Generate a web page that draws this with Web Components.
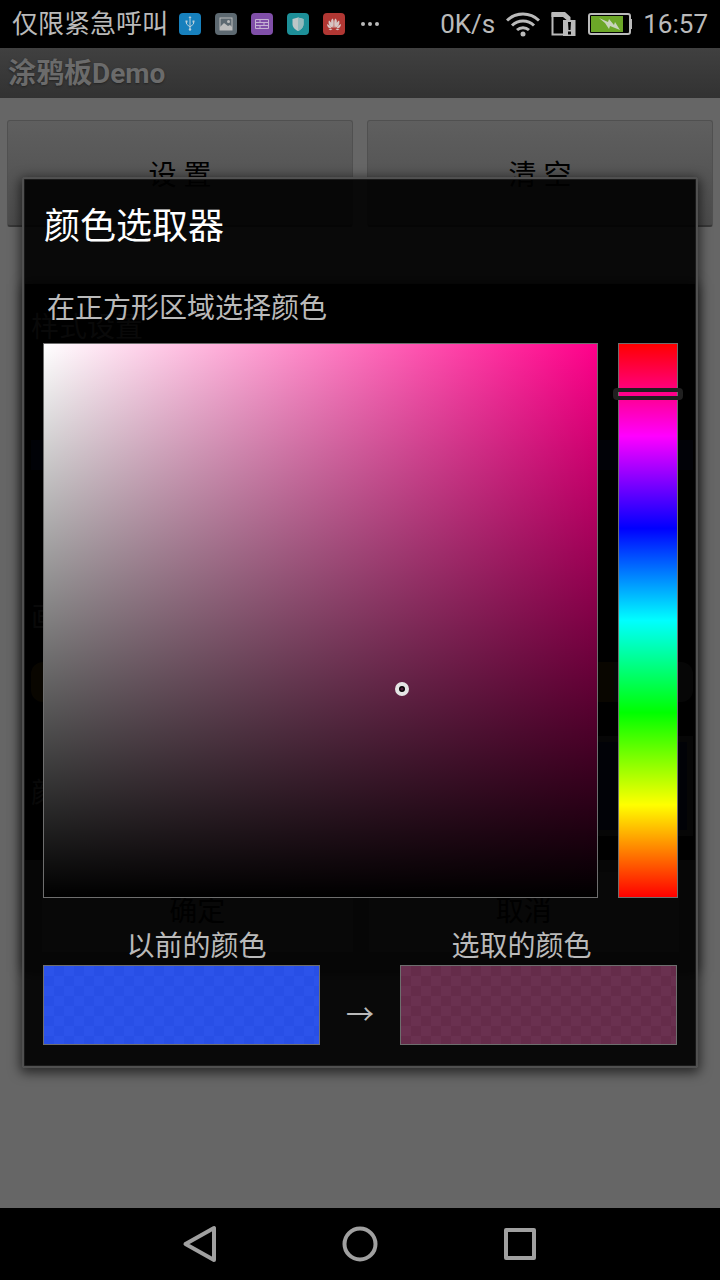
<!DOCTYPE html>
<html lang="zh-CN">
<head>
<meta charset="utf-8">
<meta name="viewport" content="width=device-width, initial-scale=1">
<title>涂鸦板Demo</title>
<style>
html, body { height: 100%; }
body { margin: 0; background: #000; font-family: Roboto, "Noto Sans CJK SC", sans-serif; }
</style>
</head>
<body>
<phone-screen>
  <status-bar slot="status"></status-bar>
  <title-bar>涂鸦板Demo</title-bar>
  <tool-row>
    <tool-button>设 置</tool-button>
    <tool-button>清 空</tool-button>
  </tool-row>
  <style-dialog slot="back"></style-dialog>
  <color-dialog slot="front"></color-dialog>
  <nav-bar slot="nav"></nav-bar>
</phone-screen>
<script>
function define(name, html) {
  const template = document.createElement('template');
  template.innerHTML = html;
  customElements.define(name, class extends HTMLElement {
    constructor() {
      super();
      this.attachShadow({ mode: 'open' }).append(template.content.cloneNode(true));
    }
  });
}

define('phone-screen', `
<style>
:host { display: flex; flex-direction: column; min-height: 100vh; }
main { position: relative; flex: 1; background: #666; }
.layer { position: absolute; inset: 0; display: grid; align-items: center; padding: 0 22px; }
.front { padding-bottom: 11px; }
</style>
<slot name="status"></slot>
<main>
  <slot></slot>
  <div class="layer"><slot name="back"></slot></div>
  <div class="layer front"><slot name="front"></slot></div>
</main>
<slot name="nav"></slot>`);

define('status-bar', `
<style>
:host { display: flex; justify-content: space-between; align-items: center; height: 48px; padding: 0 12px; background: #000; color: #bababa; font-size: 26px; line-height: 48px; white-space: nowrap; }
div { display: flex; align-items: center; }
svg { display: block; flex: none; }
.apps { gap: 11px; }
.apps svg + svg { margin-left: 3px; }
.signals { gap: 11px; }
</style>
<div class="apps">
  <span>仅限紧急呼叫</span>
  <svg width="22" height="24" viewBox="0 0 22 24" aria-hidden="true"><rect y="1" width="22" height="22" rx="4" fill="#1780bd"/><g fill="none" stroke="#b9cfdb" stroke-width="1"><path d="M11 6v11M7.500 9v3l3.500 3 3.500-3V9"/></g><g fill="#b9cfdb"><circle cx="11" cy="17.500" r="1.200"/><path d="M11 4l1.500 2h-3zM6.500 8.500h2v2h-2zM13.500 8.500h2v2h-2z"/></g></svg>
  <svg width="22" height="24" viewBox="0 0 22 24" aria-hidden="true"><rect y="1" width="22" height="22" rx="4" fill="#5d6971"/><rect x="5" y="6" width="12" height="12" fill="none" stroke="#bcbcbc"/><path d="M5 15l4-4 4 3 2-1 2 2v3H5z" fill="#bcbcbc"/><circle cx="13.500" cy="9.500" r="1.500" fill="#bcbcbc"/></svg>
  <svg width="22" height="24" viewBox="0 0 22 24" aria-hidden="true"><rect y="1" width="22" height="22" rx="4" fill="#804fa8"/><path d="M4.500 7.500h13v9h-13zM4.500 10.500h13M4.500 13.500h13M9 7.500v3M13 10.500v3M9 13.500v3" fill="none" stroke="#c5b3d3"/></svg>
  <svg width="22" height="24" viewBox="0 0 22 24" aria-hidden="true"><rect y="1" width="22" height="22" rx="4" fill="#1d8f98"/><path d="M11 5.500l5.500 1.500v5c0 3.500-2.500 5.500-5.500 7-3-1.500-5.500-3.500-5.500-7V7z" fill="#bcc6c7"/><path d="M11 5.500l5.500 1.500v5c0 3.500-2.500 5.500-5.500 7z" fill="#92b9bc"/></svg>
  <svg width="22" height="24" viewBox="0 0 22 24" aria-hidden="true"><rect y="1" width="22" height="22" rx="4" fill="#b13733"/><g fill="#d6c5c4"><path d="M10.500 16C7.500 12 7.500 8 9.500 6.500c1.500 1 1.500 5 1 9.500zM11.500 16c3-4 3-8 1-9.500-1.500 1-1.500 5-1 9.500zM9.500 16C5.500 13.500 5 10.500 6 8.500c2 1 3.500 4.500 3.500 7.500zM12.500 16c4-2.500 4.500-5.500 3.500-7.500-2 1-3.500 4.500-3.500 7.500zM8.500 16.500c-3 0-4.500-2-4.500-4.500 2 .5 4 2.500 4.500 4.500zM13.500 16.500c3 0 4.500-2 4.500-4.500-2 .5-4 2.500-4.500 4.500zM9.500 17c-1 1.500-3 1.500-4 0zM12.500 17c1 1.500 3 1.500 4 0z"/></g></svg>
  <svg width="22" height="24" viewBox="0 0 22 24" fill="#bababa" aria-hidden="true"><circle cx="4" cy="12" r="2"/><circle cx="11" cy="12" r="2"/><circle cx="18" cy="12" r="2"/></svg>
</div>
<div class="signals">
  <span>0K/s</span>
  <svg width="34" height="26" viewBox="0 0 34 26" fill="none" stroke="#bababa" stroke-width="3" aria-hidden="true"><path d="M1 9.500a23 23 0 0 1 32 0M6 14.500a16 16 0 0 1 22 0M11 19a9 9 0 0 1 12 0"/><circle cx="17" cy="23" r="2.500" fill="#bababa" stroke="none"/></svg>
  <svg width="26" height="26" viewBox="0 0 26 26" aria-hidden="true"><path d="M1.500 2v21.500H13M1.500 5H13l6 5" fill="none" stroke="#bababa" stroke-width="2"/><path d="M.5 1H14l5.500 5v4H17L12 6H.5z" fill="#bababa"/><rect x="12" y="9" width="12.500" height="16" fill="#bababa"/><path d="M17 11h3l-.5 8h-2zM17 20.500h3v3h-3z" fill="#000"/></svg>
  <svg width="44" height="24" viewBox="0 0 44 24" aria-hidden="true"><rect x="1" y="2" width="41" height="20" rx="2" fill="none" stroke="#bababa" stroke-width="2"/><path d="M42 7h2v10h-2z" fill="#bababa"/><rect x="3" y="4" width="32" height="16" fill="#6ca728"/><path d="M11 6l9 4 1-3 5 6 1-3 5 8-10-4-1 3-4-6z" fill="#c9d4bd"/></svg>
  <time>16:57</time>
</div>`);

define('title-bar', `
<style>
:host { display: block; background: linear-gradient(#404040, #323232); }
h1 { margin: 0; padding: 1px 8px 0; font-size: 28px; line-height: 49px; font-weight: 700; color: #6b6b6b; text-shadow: 0 1px 2px #222; }
</style>
<h1><slot></slot></h1>`);

define('tool-row', `
<style>
:host { display: grid; grid-template-columns: 1fr 1fr; gap: 14px; padding: 22px 7px; }
</style>
<slot></slot>`);

define('tool-button', `
<style>
:host { display: block; }
button { display: block; box-sizing: border-box; width: 100%; height: 107px; border: 1px solid #505050; border-bottom: 2px solid #383838; border-radius: 3px; padding: 0; background: linear-gradient(#5f5f5f, #4c4c4c); color: #000; font: inherit; font-size: 28px; }
</style>
<button type="button"><slot></slot></button>`);

/* Dimmed settings dialog that shows faintly through the colour picker. */
define('style-dialog', `
<style>
:host { display: block; margin: 0 1px 0 2px; background: #000; box-shadow: 0 0 12px rgba(0,0,0,.6); font-size: 28px; line-height: 40px; color: #606060; }
.body { padding: 24px 4px 24px 7px; display: flex; flex-direction: column; }
h2 { margin: 0; font-size: 28px; font-weight: 400; line-height: 40px; }
.line { height: 30px; margin-top: 92px; background: #141e50; }
.stroke { margin-top: 128px; }
.width { height: 40px; margin-top: 24px; border-radius: 12px; background: linear-gradient(to right, #644600 88%, #484848 88%); }
.tone { display: flex; align-items: center; justify-content: space-between; margin-top: 34px; }
.tone span { padding-top: 16px; }
.well { box-sizing: border-box; width: 50%; height: 100px; border: 6px solid #404040; background: #141e50; }
.actions { display: grid; grid-template-columns: 1fr 1fr; gap: 16px; padding: 12px 18px 20px; background: #404040; }
button { height: 80px; border: 0; padding: 0; background: #565656; color: #000; font: inherit; }
</style>
<div class="body">
  <h2>样式设置</h2>
  <div class="line"></div>
  <div class="stroke">画</div>
  <div class="width"></div>
  <div class="tone"><span>颜</span><div class="well"></div></div>
</div>
<div class="actions"><button type="button">确定</button><button type="button">取消</button></div>`);

define('color-dialog', `
<style>
:host { display: block; border: 2px solid #505050; border-radius: 3px; padding: 1px 9px 21px 10px; background: rgba(0,0,0,.91); box-shadow: inset 0 0 0 1px #1a1a1a, 0 3px 12px 2px rgba(0,0,0,.6); color: #bababa; }
h2 { margin: 0; padding: 0 10px; font-size: 36px; line-height: 95px; font-weight: 400; color: #fff; }
p { margin: 0; padding: 0 13px; font-size: 28px; line-height: 68px; }
.pick { display: grid; grid-template-columns: 1fr 60px; gap: 20px; padding: 0 9px; }
.names { display: grid; grid-template-columns: 1fr 1fr; margin-top: 31px; padding-right: 3px; font-size: 28px; line-height: 36px; text-align: center; }
.compare { display: grid; grid-template-columns: 1fr 80px 1fr; align-items: center; padding: 0 10px 0 9px; text-align: center; font-size: 28px; line-height: 80px; }
.before { --tint: #2c53ea; --check: #284fe6; }
.after { --tint: #6a3150; --check: #652c4a; }
.arrow { font-family: "Noto Sans CJK SC", sans-serif; padding-top: 16px; line-height: 64px; }
</style>
<section role="dialog" aria-labelledby="title">
  <h2 id="title">颜色选取器</h2>
  <p>在正方形区域选择颜色</p>
  <div class="pick"><shade-field></shade-field><hue-slider></hue-slider></div>
  <div class="names"><span>以前的颜色</span><span>选取的颜色</span></div>
  <div class="compare"><color-swatch class="before"></color-swatch><span class="arrow">→</span><color-swatch class="after"></color-swatch></div>
</section>`);

define('shade-field', `
<style>
:host { display: block; position: relative; box-sizing: border-box; aspect-ratio: 1; border: 1px solid #6e6e6e; background: linear-gradient(transparent, #000), linear-gradient(to right, #fff, #ff008a); }
i { position: absolute; left: 64.700%; top: 62.300%; width: 6px; height: 6px; margin: -7px; border: 4px solid #e4e4e4; border-radius: 50%; background: radial-gradient(#50203c 1px, #000 2px); }
</style>
<i></i>`);

define('hue-slider', `
<style>
:host { display: grid; }
input { appearance: none; box-sizing: border-box; writing-mode: vertical-lr; width: 60px; height: 100%; margin: 0; border: 1px solid #6e6e6e; background: linear-gradient(#f00, #f0f, #00f, #0ff, #0f0, #ff0, #f00); }
input::-webkit-slider-runnable-track { width: 58px; height: 100%; }
input::-webkit-slider-thumb { appearance: none; box-sizing: border-box; width: 70px; height: 12px; margin-left: -6px; border: 4px solid #202020; border-left-width: 5px; border-right-width: 5px; border-radius: 4px; background: transparent; }
</style>
<input type="range" min="0" max="360" value="29" aria-label="色相">`);

define('color-swatch', `
<style>
:host { display: block; box-sizing: border-box; height: 80px; border: 1px solid #6e6e6e; background: repeating-conic-gradient(var(--check) 0 25%, var(--tint) 0 50%) 0 0 / 20px 20px; }
</style>`);

define('nav-bar', `
<style>
:host { display: flex; justify-content: center; height: 72px; background: #000; }
button { display: grid; place-items: center; width: 160px; height: 72px; border: 0; padding: 0; background: none; }
svg { display: block; fill: none; stroke: #a0a0a0; stroke-width: 4; stroke-linejoin: round; }
</style>
<button type="button" aria-label="返回"><svg width="40" height="40" viewBox="0 0 40 40"><path d="M34 4v32L5.500 20z"/></svg></button>
<button type="button" aria-label="主页"><svg width="40" height="40" viewBox="0 0 40 40"><circle cx="20" cy="20" r="15.500"/></svg></button>
<button type="button" aria-label="最近任务"><svg width="40" height="40" viewBox="0 0 40 40"><path d="M6 6h28v28H6z"/></svg></button>`);
</script>
</body>
</html>
